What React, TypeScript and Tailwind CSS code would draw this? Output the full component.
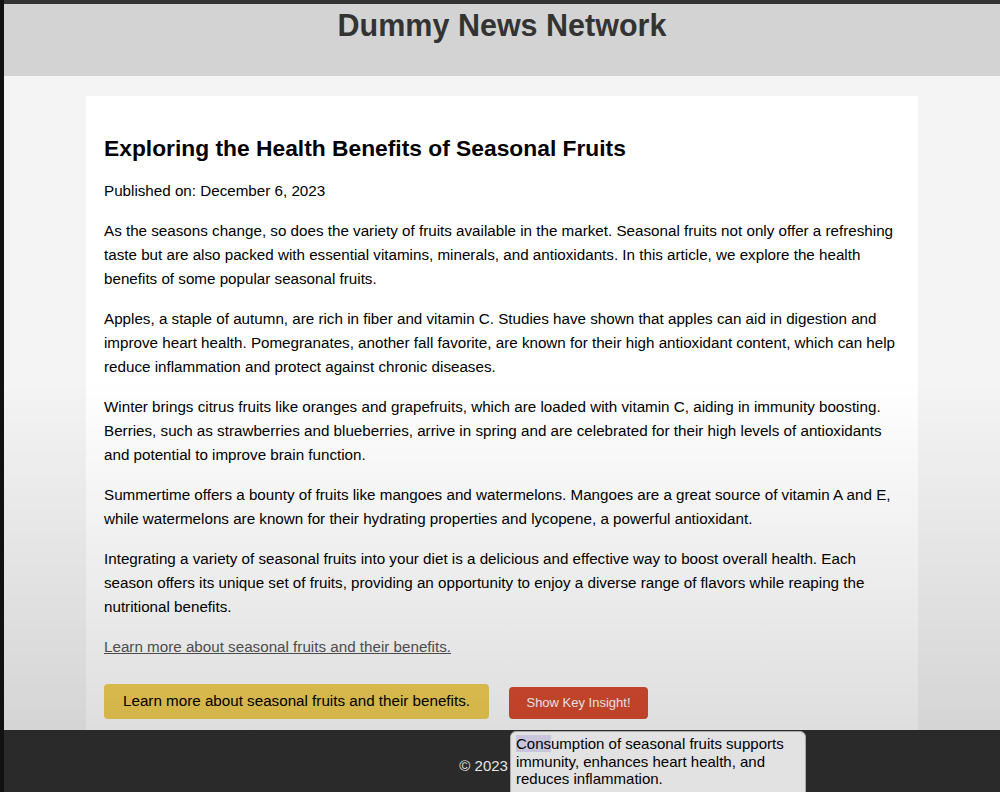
import React from "react";

const paragraphs = [
  "As the seasons change, so does the variety of fruits available in the market. Seasonal fruits not only offer a refreshing taste but are also packed with essential vitamins, minerals, and antioxidants. In this article, we explore the health benefits of some popular seasonal fruits.",
  "Apples, a staple of autumn, are rich in fiber and vitamin C. Studies have shown that apples can aid in digestion and improve heart health. Pomegranates, another fall favorite, are known for their high antioxidant content, which can help reduce inflammation and protect against chronic diseases.",
  "Winter brings citrus fruits like oranges and grapefruits, which are loaded with vitamin C, aiding in immunity boosting. Berries, such as strawberries and blueberries, arrive in spring and are celebrated for their high levels of antioxidants and potential to improve brain function.",
  "Summertime offers a bounty of fruits like mangoes and watermelons. Mangoes are a great source of vitamin A and E, while watermelons are known for their hydrating properties and lycopene, a powerful antioxidant.",
  "Integrating a variety of seasonal fruits into your diet is a delicious and effective way to boost overall health. Each season offers its unique set of fruits, providing an opportunity to enjoy a diverse range of flavors while reaping the nutritional benefits.",
];

export default function App() {
  return (
    <div className="h-[792px] overflow-hidden border-l-4 border-[#111] bg-[#f4f4f4] font-['Liberation_Sans',Arial,sans-serif] text-black">
      <div className="h-1 bg-[#333]" />
      <header className="h-[72px] bg-[#d3d3d3] pt-[3px] text-center">
        <h1 className="text-[30.5px] font-bold leading-9 text-[#333]">Dummy News Network</h1>
      </header>

      <main className="relative pt-5">
        <article className="mx-auto w-[832px] bg-white px-[18px] pb-[11px] pt-[18px]">
          <h2 className="mt-[21px] text-[22.8px] font-bold leading-[26px]">
            Exploring the Health Benefits of Seasonal Fruits
          </h2>
          <p className="mt-[18px] text-[15.2px] leading-6">Published on: December 6, 2023</p>
          {paragraphs.map((text) => (
            <p key={text.slice(0, 12)} className="mt-4 text-[15.2px] leading-6">
              {text}
            </p>
          ))}
          <a href="#" className="mt-4 block text-[15.2px] leading-6 text-[#555] underline">
            Learn more about seasonal fruits and their benefits.
          </a>
          <div className="mt-[25px] flex items-end gap-5">
            <button className="h-[35px] rounded bg-[#f1cf55] px-[19px] text-[15.2px] text-black">
              Learn more about seasonal fruits and their benefits.
            </button>
            <div className="relative">
              <button className="h-8 w-[139px] rounded bg-[#d94b2f] text-[13px] text-white">
                Show Key Insight!
              </button>
              <div className="absolute left-px top-11 z-20 h-[70px] w-[296px] rounded-md border border-[#aaa] bg-[#e2e2e2] px-[5px] pt-[3px] text-[15px] leading-[17.5px] text-black">
                <span className="bg-[#c8c5dc]">Cons</span>umption of seasonal fruits supports immunity,
                enhances heart health, and reduces inflammation.
              </div>
            </div>
          </div>
        </article>
        <div className="pointer-events-none absolute inset-x-0 bottom-0 top-[304px] bg-gradient-to-b from-transparent to-[rgba(0,0,0,0.13)]" />
      </main>

      <footer className="h-[62px] bg-[#2a2a2a] pt-[26px] text-center text-[15px] leading-5 text-[#e6e6e6]">
        © 2023 DNN
      </footer>
    </div>
  );
}
